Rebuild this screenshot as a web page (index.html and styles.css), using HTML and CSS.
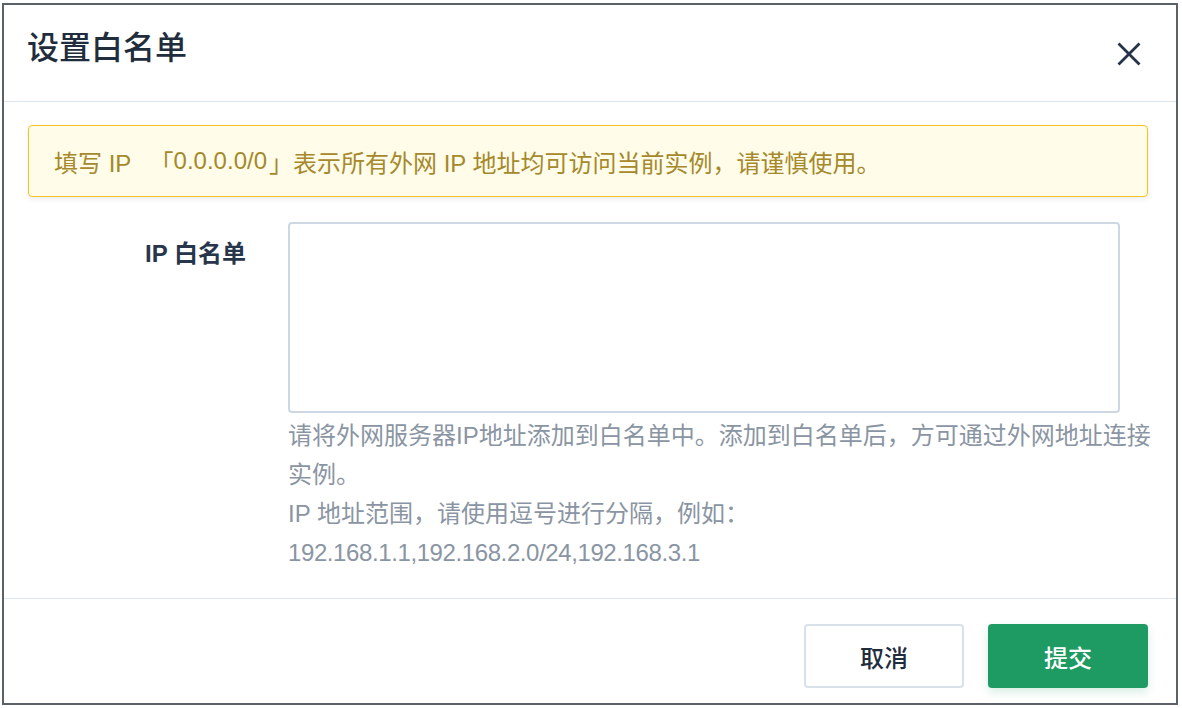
FILE: index.html
```html
<!DOCTYPE html>
<html lang="zh-CN">
<head>
<meta charset="utf-8">
<title>设置白名单</title>
<link rel="stylesheet" href="styles.css">
</head>
<body>
<div class="frame">
  <div class="header">
    <div class="title">设置白名单</div>
    <svg class="close" width="24" height="24" viewBox="0 0 24 24" aria-label="关闭">
      <path d="M2.5 2.5 L21.5 21.5 M21.5 2.5 L2.5 21.5" stroke="#25334a" stroke-width="2.8" stroke-linecap="square" fill="none"/>
    </svg>
  </div>
  <div class="body">
    <div class="alert">填写 IP <span class="bracket-open">「</span>0.0.0.0/0<span class="bracket-close">」</span>表示所有外网 IP 地址均可访问当前实例，请谨慎使用。</div>
    <div class="form-row">
      <label class="label" for="ips">IP 白名单</label>
      <div class="field">
        <textarea id="ips" class="input"></textarea>
        <div class="help">
          <div class="nowrap">请将外网服务器IP地址添加到白名单中。添加到白名单后，方可通过外网地址连接</div>
          <div>实例。</div>
          <div>IP 地址范围，请使用逗号进行分隔，例如：</div>
          <div class="example">192.168.1.1,192.168.2.0/24,192.168.3.1</div>
        </div>
      </div>
    </div>
  </div>
  <div class="footer">
    <button class="btn btn-cancel" type="button">取消</button>
    <button class="btn btn-primary" type="button">提交</button>
  </div>
</div>
</body>
</html>
```

FILE: styles.css
```css
html, body {
  margin: 0;
  padding: 0;
  background: #ffffff;
}
body {
  font-family: "Liberation Sans", "Noto Sans CJK SC", sans-serif;
  width: 1182px;
  height: 708px;
  overflow: hidden;
}
.frame {
  margin: 3px 4px 3px 2px;
  width: 1176px;
  height: 702px;
  box-sizing: border-box;
  border: 2px solid #5b6069;
  display: flex;
  flex-direction: column;
  background: #fff;
}
.header {
  height: 97px;
  flex: none;
  box-sizing: border-box;
  border-bottom: 1px solid #dde6ee;
  display: flex;
  justify-content: space-between;
  align-items: flex-start;
  padding: 0 35px 0 23px;
}
.title {
  font-size: 32px;
  line-height: 40px;
  padding-top: 23px;
  font-weight: 500;
  color: #1f2d3d;
}
.close {
  align-self: center;
  margin-top: 2px;
}
.body {
  flex: 1;
  padding: 23px 28px 0 24px;
}
.alert {
  height: 72px;
  box-sizing: border-box;
  border: 1px solid #f6c325;
  border-radius: 4px;
  background: #fffcea;
  box-shadow: 0 2px 6px rgba(0, 0, 0, 0.08);
  display: flex;
  align-items: center;
  padding: 0 25px;
  font-size: 24px;
  color: #a5892a;
  white-space: pre;
}
.bracket-open {
  margin-left: 12px;
}
.bracket-close {
  margin-left: 2px;
}
.form-row {
  display: grid;
  grid-template-columns: 218px 1fr;
  column-gap: 42px;
  margin-top: 25px;
}
.label {
  text-align: right;
  font-size: 24px;
  line-height: 40px;
  padding-top: 12px;
  font-weight: 600;
  color: #27364a;
}
.field {
  min-width: 0;
}
.input {
  display: block;
  width: 832px;
  height: 191px;
  box-sizing: border-box;
  border: 2px solid #cdd8e3;
  border-radius: 4px;
  resize: none;
  margin: 0;
  padding: 10px 14px;
  font: inherit;
  font-size: 24px;
  outline: none;
}
.help {
  margin-top: 3px;
  font-size: 24px;
  line-height: 39px;
  color: #8a95a3;
}
.nowrap {
  white-space: nowrap;
}
.example {
  letter-spacing: -0.4px;
}
.footer {
  height: 105px;
  flex: none;
  box-sizing: border-box;
  border-top: 1px solid #dde6ee;
  display: flex;
  justify-content: flex-end;
  align-items: flex-start;
  gap: 24px;
  padding: 25px 28px 0 0;
}
.btn {
  width: 160px;
  height: 64px;
  box-sizing: border-box;
  border-radius: 4px;
  font-family: inherit;
  font-size: 24px;
  font-weight: 500;
  cursor: pointer;
}
.btn-cancel {
  background: #fff;
  border: 2px solid #d8e0e9;
  color: #1f2d3d;
}
.btn-primary {
  background: #1e9b63;
  border: none;
  color: #fff;
  box-shadow: 0 4px 10px rgba(30, 155, 99, 0.18);
}
```
